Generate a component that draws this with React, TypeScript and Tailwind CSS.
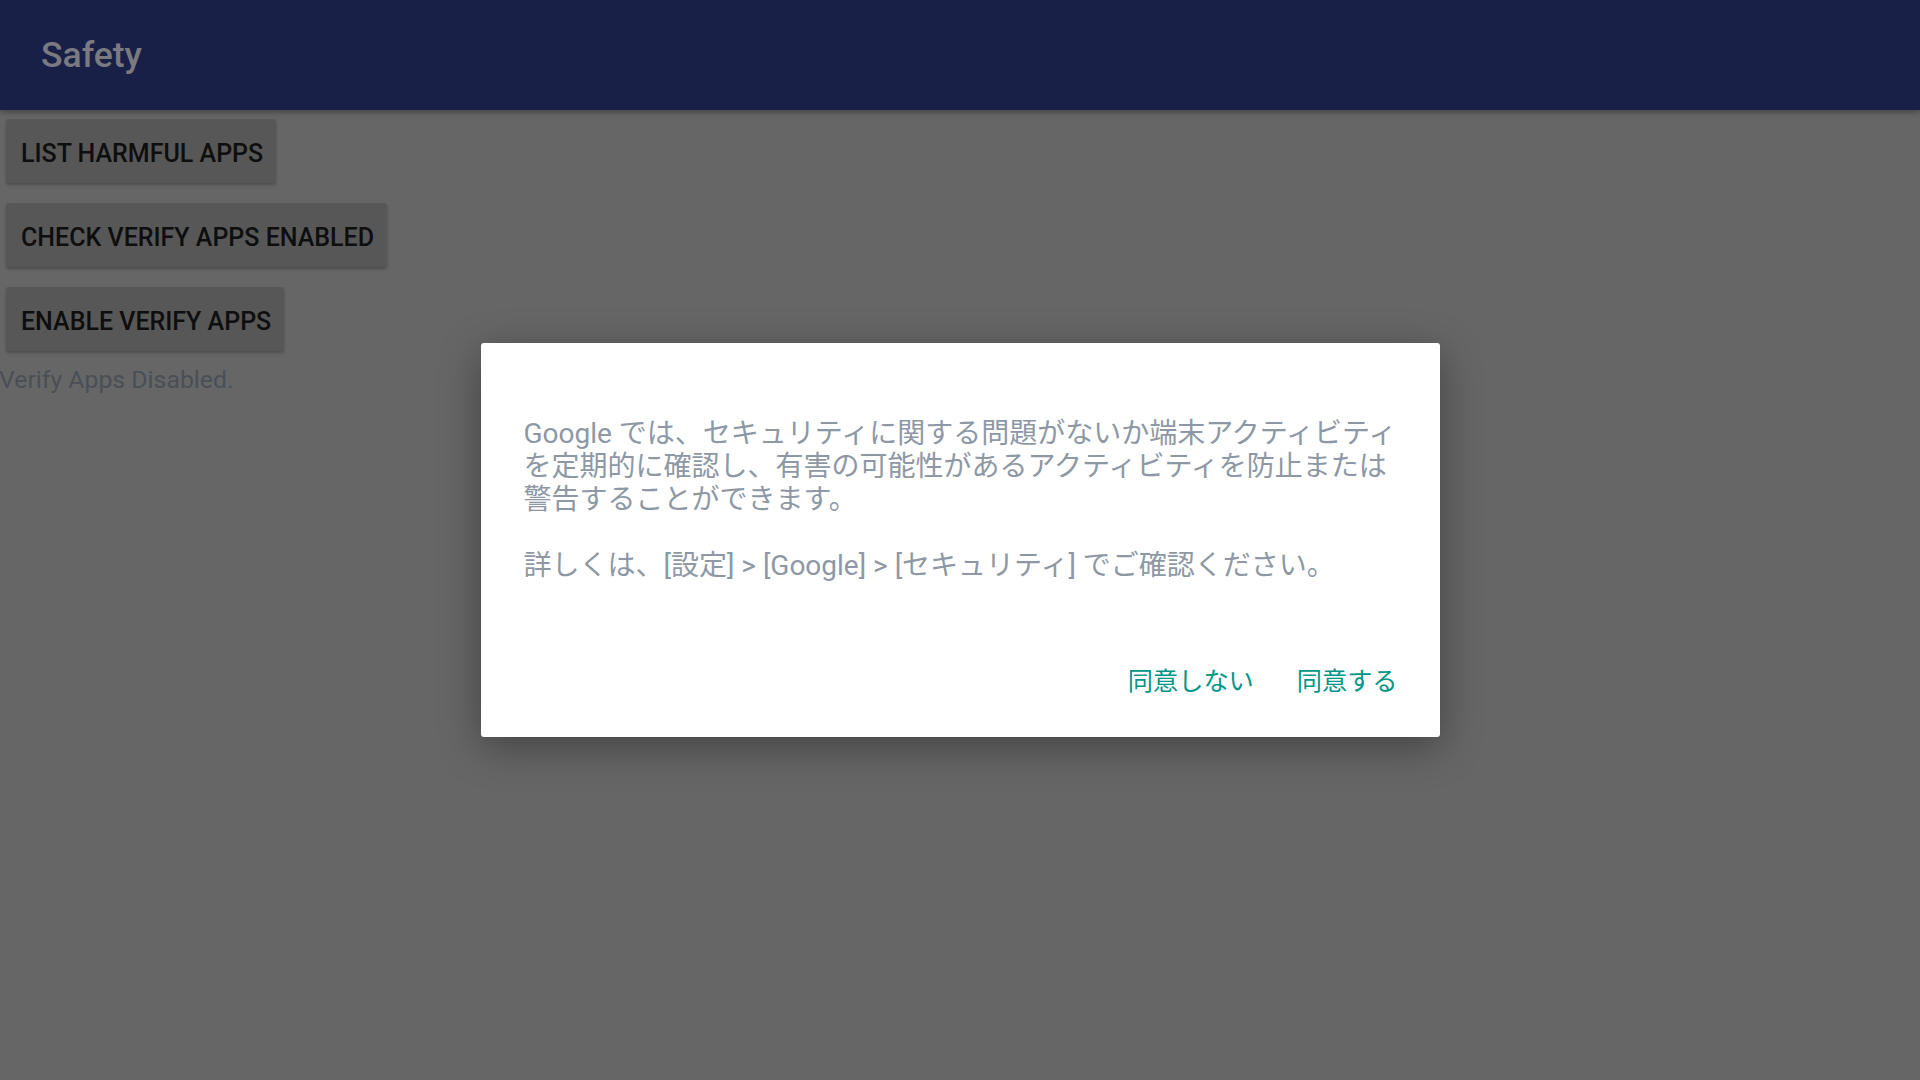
import React from "react";

const btn =
  "h-[64px] pl-[15px] pr-[13px] pt-[5px] flex items-center rounded-[3px] bg-[#575757] text-[#0e0e0e] font-medium text-[25px] shadow-[0_2px_3px_rgba(0,0,0,0.25)]";

export default function App() {
  return (
    <div
      className="relative w-[1920px] h-[1080px] overflow-hidden bg-[#666666]"
      style={{ fontFamily: "Roboto, 'Noto Sans CJK JP', sans-serif" }}
    >
      <header className="h-[110px] bg-[#192048] flex items-center pl-[41px] shadow-[0_2px_6px_rgba(0,0,0,0.35)] relative z-10">
        <span className="text-[35.5px] font-medium text-[#7a7a80] leading-none pt-[2px]">
          Safety
        </span>
      </header>
      <main className="flex flex-col items-start pl-[6px] pt-[9px] gap-[20px]">
        <div className={btn}>LIST HARMFUL APPS</div>
        <div className={btn}>CHECK VERIFY APPS ENABLED</div>
        <div className={btn}>ENABLE VERIFY APPS</div>
      </main>
      <div className="-ml-[1px] mt-[13px] text-[24.8px] text-[#4a4f57] leading-[32px]">
        Verify Apps Disabled.
      </div>

      <div className="absolute inset-0 flex items-center justify-center">
        <div className="w-[959px] h-[394px] bg-white rounded-[3px] shadow-[0_10px_40px_rgba(0,0,0,0.35)] flex flex-col pl-[43px] pr-[31px] pt-[74px]">
          <div className="text-[28px] leading-[33px] text-[#8e98a5] whitespace-pre-wrap">
            {"Google では、セキュリティに関する問題がないか端末アクティビティを定期的に確認し、有害の可能性があるアクティビティを防止または警告することができます。\n\n詳しくは、[設定] > [Google] > [セキュリティ] でご確認ください。"}
          </div>
          <div className="flex justify-end gap-[43px] mt-[84px] text-[25.2px] leading-[32px] text-[#009688] pr-[11px]">
            <span>同意しない</span>
            <span>同意する</span>
          </div>
        </div>
      </div>
    </div>
  );
}
